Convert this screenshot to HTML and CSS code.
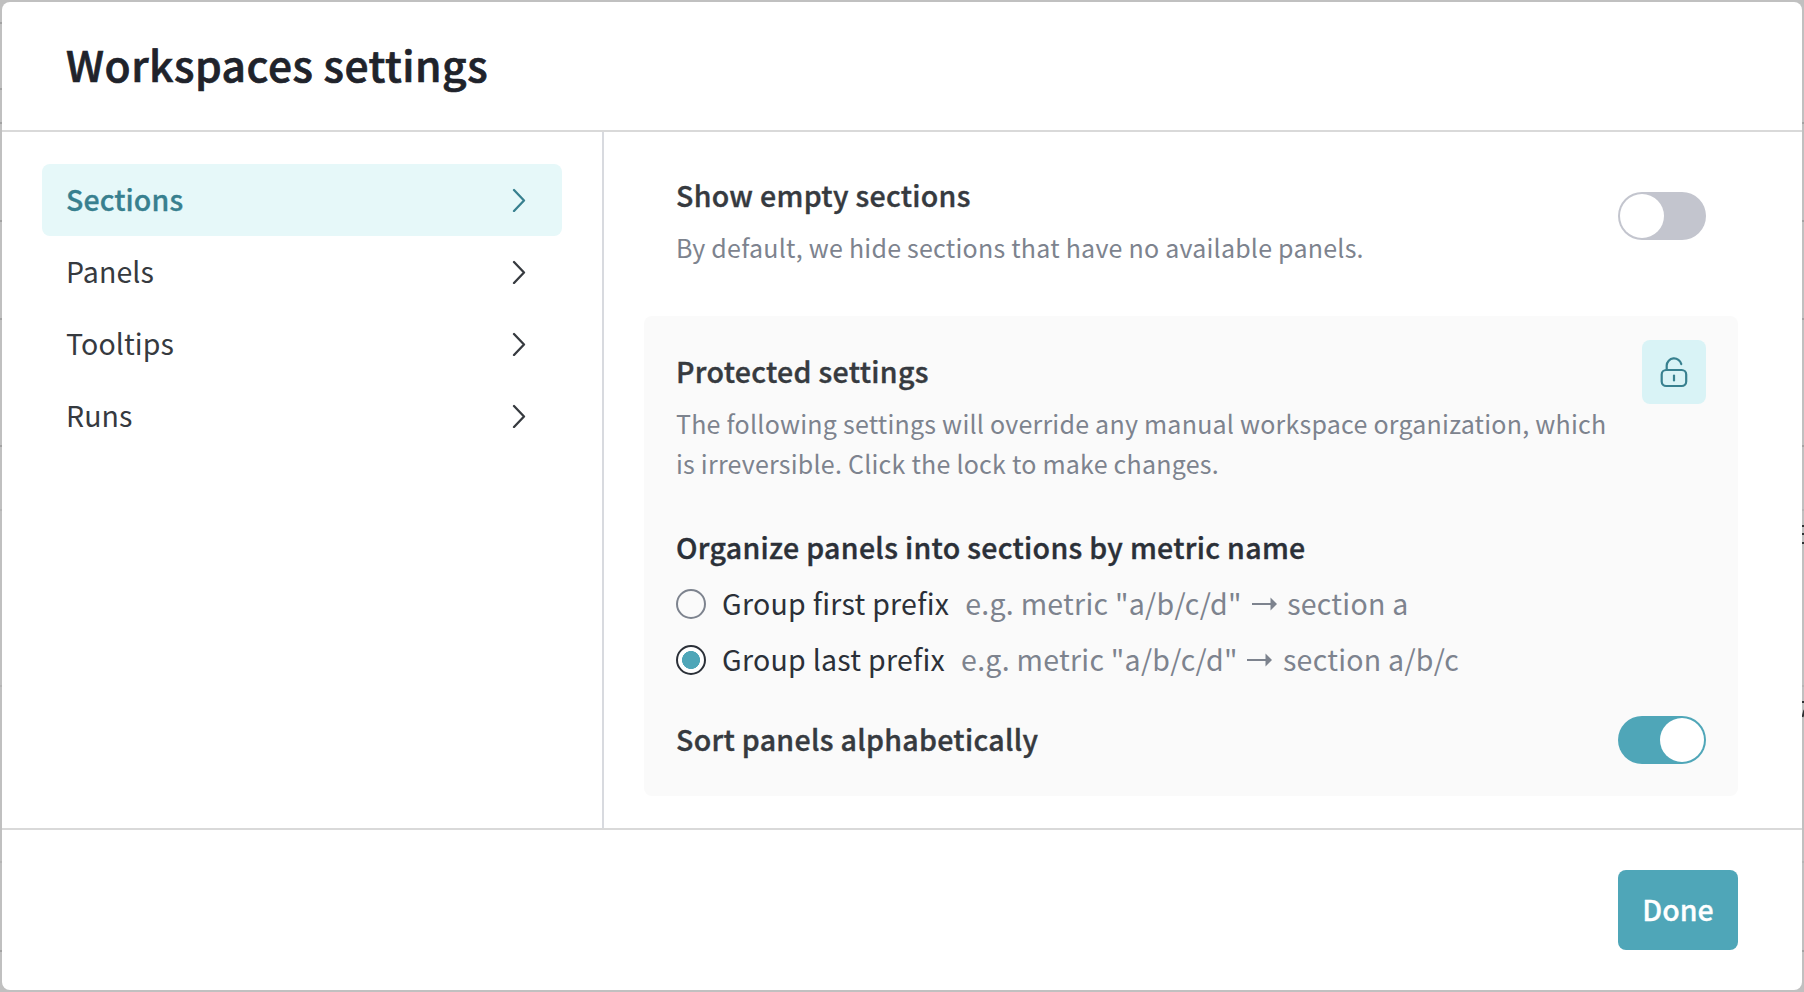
FILE: index.html
```html
<!DOCTYPE html>
<html lang="en">
<head>
<meta charset="utf-8">
<title>Workspaces settings</title>
<link rel="stylesheet" href="styles.css">
</head>
<body>
<svg class="backdrop" viewBox="0 0 1804 992">
  <path class="rule" d="M0 23h2M0 89h2M0 123h1804M0 221h1804M0 319h1804M0 446h1804M0 951h1804"/>
  <path class="rule faint" d="M0 510h1804M0 686h1804M0 862h1804"/>
  <path class="ink" d="M1802 526h2M1802 534h2M1802 543h2M1802 702h2M1802.500 717l2-7"/>
</svg>
<div class="modal">
  <header class="header"><h1 class="title">Workspaces settings</h1></header>
  <div class="body">
    <nav class="sidebar">
      <a class="item active"><span class="itemtext">Sections</span><svg class="chev" viewBox="0 0 14 24"><path d="M2 2 12 12.500 2 23"/></svg></a>
      <a class="item"><span class="itemtext">Panels</span><svg class="chev" viewBox="0 0 14 24"><path d="M2 2 12 12.500 2 23"/></svg></a>
      <a class="item"><span class="itemtext">Tooltips</span><svg class="chev" viewBox="0 0 14 24"><path d="M2 2 12 12.500 2 23"/></svg></a>
      <a class="item"><span class="itemtext">Runs</span><svg class="chev" viewBox="0 0 14 24"><path d="M2 2 12 12.500 2 23"/></svg></a>
    </nav>
    <main class="content">
      <section class="setting">
        <div>
          <h2 class="name">Show empty sections</h2>
          <p class="desc">By default, we hide sections that have no available panels.</p>
        </div>
        <span class="toggle"><span class="knob"></span></span>
      </section>
      <section class="protected">
        <div class="lockrow">
          <div>
            <h2 class="name">Protected settings</h2>
            <p class="desc">The following settings will override any manual workspace organization, which<br>is irreversible. Click the lock to make changes.</p>
          </div>
          <button class="lock"><svg class="lockicon" viewBox="0 0 64 64"><rect x="19.700" y="30" width="24.500" height="16" rx="4.500"/><path d="M24.700 30v-4.500a7.400 7.400 0 0 1 14.600-1.400"/><path class="keyhole" d="M32 34.700v6.600"/></svg></button>
        </div>
        <h2 class="name dark organize">Organize panels into sections by metric name</h2>
        <label class="option"><span class="radio"></span><span class="label">Group first prefix</span><span class="hint">e.g. metric "a/b/c/d" <svg class="arrow" viewBox="0 0 25 14"><path class="shaft" d="M0 7h20"/><path class="head" d="M18.500 .5 25 7l-6.500 6.500z"/></svg> section a</span></label>
        <label class="option"><span class="radio on"></span><span class="label">Group last prefix</span><span class="hint">e.g. metric "a/b/c/d" <svg class="arrow" viewBox="0 0 25 14"><path class="shaft" d="M0 7h20"/><path class="head" d="M18.500 .5 25 7l-6.500 6.500z"/></svg> section a/b/c</span></label>
        <div class="sort"><h2 class="name">Sort panels alphabetically</h2><span class="toggle checked"><span class="knob"></span></span></div>
      </section>
    </main>
  </div>
  <footer class="footer"><button class="done">Done</button></footer>
</div>
</body>
</html>
```
FILE: styles.css
```css
* { box-sizing: border-box; margin: 0; padding: 0; }
body { width: 1804px; height: 992px; padding: 2px; overflow: hidden; background: #c0c0c0;
  font-family: "Noto Sans CJK SC", sans-serif; font-size: 28.500px; line-height: 40px; color: #363a3f; }
.backdrop { position: absolute; left: 0; top: 0; width: 1804px; height: 992px; }
.rule { stroke: #a3a3a3; stroke-width: 2; }
.faint { stroke: #b5b5b5; }
.ink { stroke: #2f3134; stroke-width: 2; }
.modal { position: relative; width: 1800px; height: 988px; background: #fff; border-radius: 8px; display: flex; flex-direction: column; overflow: hidden; }
.header { height: 130px; border-bottom: 2px solid #d9d9d9; padding: 32px 64px; }
.title { font-size: 42.500px; line-height: 60px; font-weight: 500; color: #20232b; white-space: nowrap; letter-spacing: .52px; -webkit-text-stroke: .7px #20232b; }
.body { flex: 1; display: flex; }
.sidebar { width: 602px; border-right: 2px solid #d8dadf; padding: 32px 40px; }
.item { display: flex; justify-content: space-between; align-items: center; height: 72px; padding: 0 36px 0 24px; border-radius: 8px; letter-spacing: .1px; }
.itemtext { padding-bottom: 2px; }
.active { background: #e6f8f9; color: #38808f; font-weight: 500; }
.active .itemtext { -webkit-text-stroke: .3px #38808f; }
.chev { width: 14px; height: 24px; fill: none; stroke: currentColor; stroke-width: 2.300; stroke-linecap: round; stroke-linejoin: round; }
.content { flex: 1; padding: 44px 64px 0 40px; }
.setting { height: 140px; padding: 0 32px; display: flex; justify-content: space-between; }
.setting .toggle { margin-top: 16px; }
.name { font-size: 28.500px; line-height: 40px; font-weight: 500; white-space: nowrap; letter-spacing: .32px; -webkit-text-stroke: .4px currentColor; }
.setting .name { margin-top: -1px; }
.dark { color: #2b3038; }
.desc { font-size: 25px; line-height: 40px; margin-top: 12px; color: #7d838e; white-space: nowrap; letter-spacing: .23px; }
.protected { height: 480px; background: #fafafa; border-radius: 8px; padding: 24px 32px; }
.lockrow { display: flex; justify-content: space-between; }
.lockrow .name { margin-top: 11px; }
.lock { border: 0; width: 64px; height: 64px; flex: none; border-radius: 8px; background: #d9f3f6; margin-left: -40px; }
.lockicon { display: block; width: 64px; height: 64px; fill: none; stroke: #38808f; stroke-width: 2.200; stroke-linecap: round; }
.keyhole { stroke-linecap: butt; }
.organize { margin-top: 44px; }
.option { display: flex; align-items: center; height: 56px; white-space: nowrap; letter-spacing: .27px; }
.organize + .option { margin-top: 9px; }
.radio { width: 30px; height: 30px; border: 2px solid #7d838e; border-radius: 50%; margin-right: 16px; }
.on { border-color: #2b3038; background: radial-gradient(circle, #4fa6b8 8.700px, #fff 9.300px); }
.label { color: #2b3038; padding-bottom: 2px; }
.hint { margin-left: 16px; padding-bottom: 2px; color: #7d838e; }
.arrow { width: 25px; height: 14px; margin: 0 4px 0 3px; vertical-align: 4px; fill: #7d838e; }
.shaft { stroke: #7d838e; stroke-width: 2; }
.sort { display: flex; justify-content: space-between; align-items: center; margin-top: 28px; height: 48px; }
.sort .name { padding-bottom: 2px; }
.toggle { width: 88px; height: 48px; border-radius: 24px; background: #c3c5ce; padding: 2px; display: flex; }
.knob { width: 44px; height: 44px; border-radius: 50%; background: #fff; }
.checked { background: #4fa6b8; justify-content: flex-end; }
.footer { height: 162px; border-top: 2px solid #d9d9d9; padding: 40px 64px; display: flex; justify-content: flex-end; }
.done { border: 0; width: 120px; height: 80px; padding-bottom: 2px; border-radius: 8px; background: #4fa6b8; color: #fff; font: 500 28.500px/40px "Noto Sans CJK SC", sans-serif; -webkit-text-stroke: .3px #fff; }
```
